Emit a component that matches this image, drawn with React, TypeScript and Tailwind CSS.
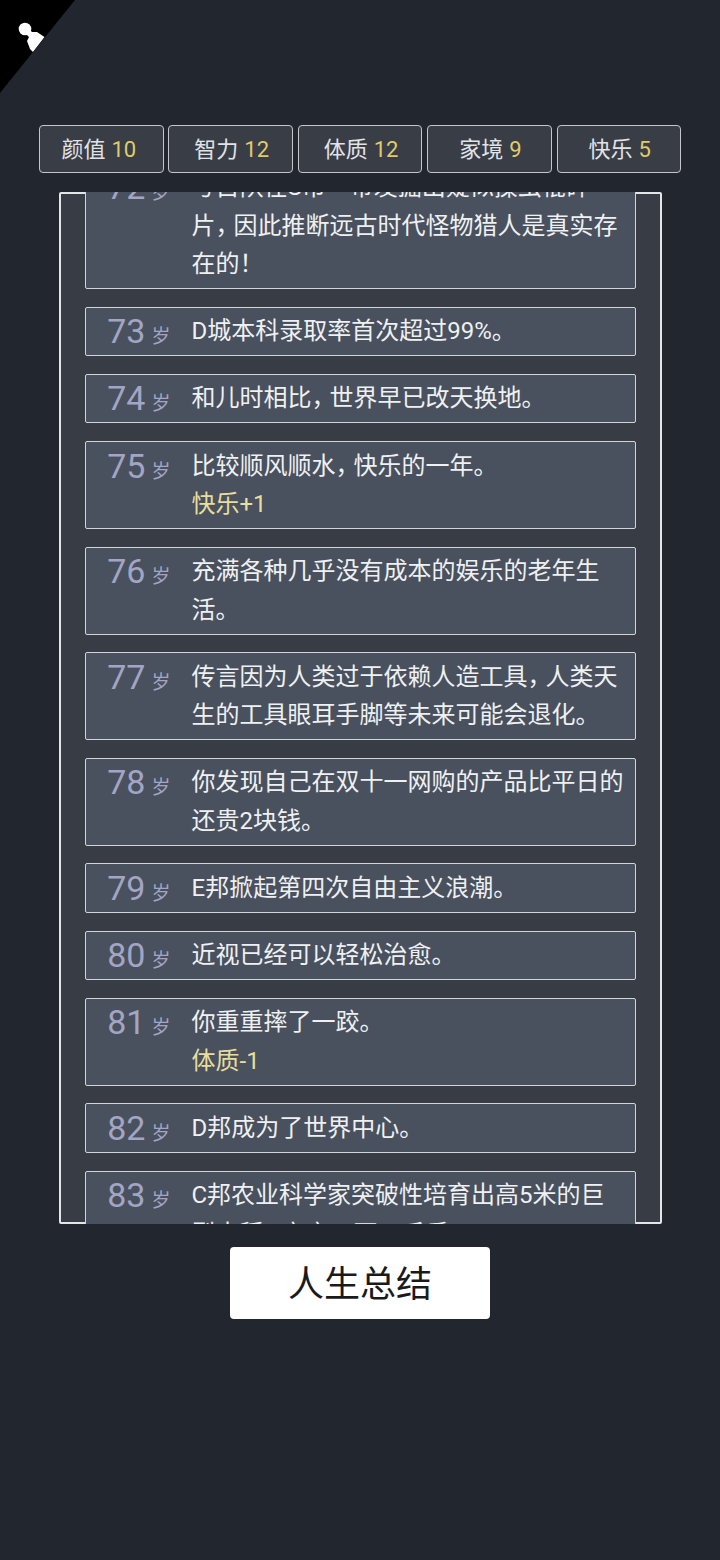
const SANS = 'font-["Roboto","Noto_Sans_CJK_SC",sans-serif]';

const stats = [
  { label: '颜值', value: 10 },
  { label: '智力', value: 12 },
  { label: '体质', value: 12 },
  { label: '家境', value: 9 },
  { label: '快乐', value: 5 },
];

const events: { age: number; text: string; effect?: string }[] = [
  { age: 72, text: '考古队在S市一带发掘出疑似操虫棍碎片，因此推断远古时代怪物猎人是真实存在的！' },
  { age: 73, text: 'D城本科录取率首次超过99%。' },
  { age: 74, text: '和儿时相比，世界早已改天换地。' },
  { age: 75, text: '比较顺风顺水，快乐的一年。', effect: '快乐+1' },
  { age: 76, text: '充满各种几乎没有成本的娱乐的老年生活。' },
  { age: 77, text: '传言因为人类过于依赖人造工具，人类天生的工具眼耳手脚等未来可能会退化。' },
  { age: 78, text: '你发现自己在双十一网购的产品比平日的还贵2块钱。' },
  { age: 79, text: 'E邦掀起第四次自由主义浪潮。' },
  { age: 80, text: '近视已经可以轻松治愈。' },
  { age: 81, text: '你重重摔了一跤。', effect: '体质-1' },
  { age: 82, text: 'D邦成为了世界中心。' },
  { age: 83, text: 'C邦农业科学家突破性培育出高5米的巨型水稻，亩产一万五千斤。' },
];

// the phone font sets the full width comma narrower than a full em
function Line({ text }: { text: string }) {
  return (
    <>
      {text.split('，').map((part, i) => (
        <span key={i}>
          {i > 0 && <span className="tracking-[-6px]">，</span>}
          {part}
        </span>
      ))}
    </>
  );
}

function EventRow({ age, text, effect }: { age: number; text: string; effect?: string }) {
  return (
    <li className="flex rounded-[2px] border border-[#d2d4d8] bg-[#49515e] py-[4.6px]">
      <div className="flex h-[38px] w-[85px] shrink-0 items-baseline justify-end">
        <span className="text-[34px] leading-[38px] text-[#a3a5c4]">{age}</span>
        <span className="ml-[6px] text-[19px] leading-[38px] text-[#a3a5c4]">岁</span>
      </div>
      <div className="ml-[21px] w-[436px] text-[24px] leading-[38.4px] text-[#eff0f2]">
        <Line text={text} />
        {effect && <div className="text-[#e8de9c]">{effect}</div>}
      </div>
    </li>
  );
}

export default function App() {
  return (
    <div className={`relative h-[1560px] w-[720px] overflow-hidden bg-[#22262e] ${SANS}`}>
      {/* corner badge */}
      <div className="absolute left-0 top-0 h-[93px] w-[75px] bg-black [clip-path:polygon(0_0,100%_0,0_100%)]">
        <svg viewBox="0 0 30 32" className="absolute left-[18px] top-[21px] h-[32px] w-[30px]" fill="#fff">
          <circle cx="7" cy="8" r="6.3" />
          <path d="M6 11 L11 8 L14 11 L19 11 L26.5 16 L15 31 L12 28 L9 20 L11 16 Z" />
        </svg>
      </div>

      <div className="flex flex-col items-center pt-[125px]">
        <div className="flex w-[642px] justify-between">
          {stats.map((s) => (
            <div
              key={s.label}
              className="flex h-[48px] w-[124.5px] items-center justify-center gap-[6px] rounded-[4px] border border-[#c4c6cb] bg-[#393d46] pl-[2px] text-[22px] text-[#e2e3e6] first:pl-0 first:pr-[5px]"
            >
              <span>{s.label}</span>
              <span className="text-[#e0cb6a]">{s.value}</span>
            </div>
          ))}
        </div>

        <div className="mt-[19px] h-[1032px] w-[603px] rounded-[2px] border-2 border-[#e4e5e8] bg-[#383c45]">
          <div className="-my-[2px] h-[1032px] overflow-hidden">
            <ul className="mx-[24px] -mt-[29.4px] flex flex-col gap-[17.6px]">
              {events.map((e) => (
                <EventRow key={e.age} age={e.age} text={e.text} effect={e.effect} />
              ))}
            </ul>
          </div>
        </div>

        <button className="mt-[23px] flex h-[72px] w-[260px] items-center justify-center rounded-[4px] bg-white pt-[4px] text-[36px] text-[#1a1a1a]">
          人生总结
        </button>
      </div>
    </div>
  );
}
